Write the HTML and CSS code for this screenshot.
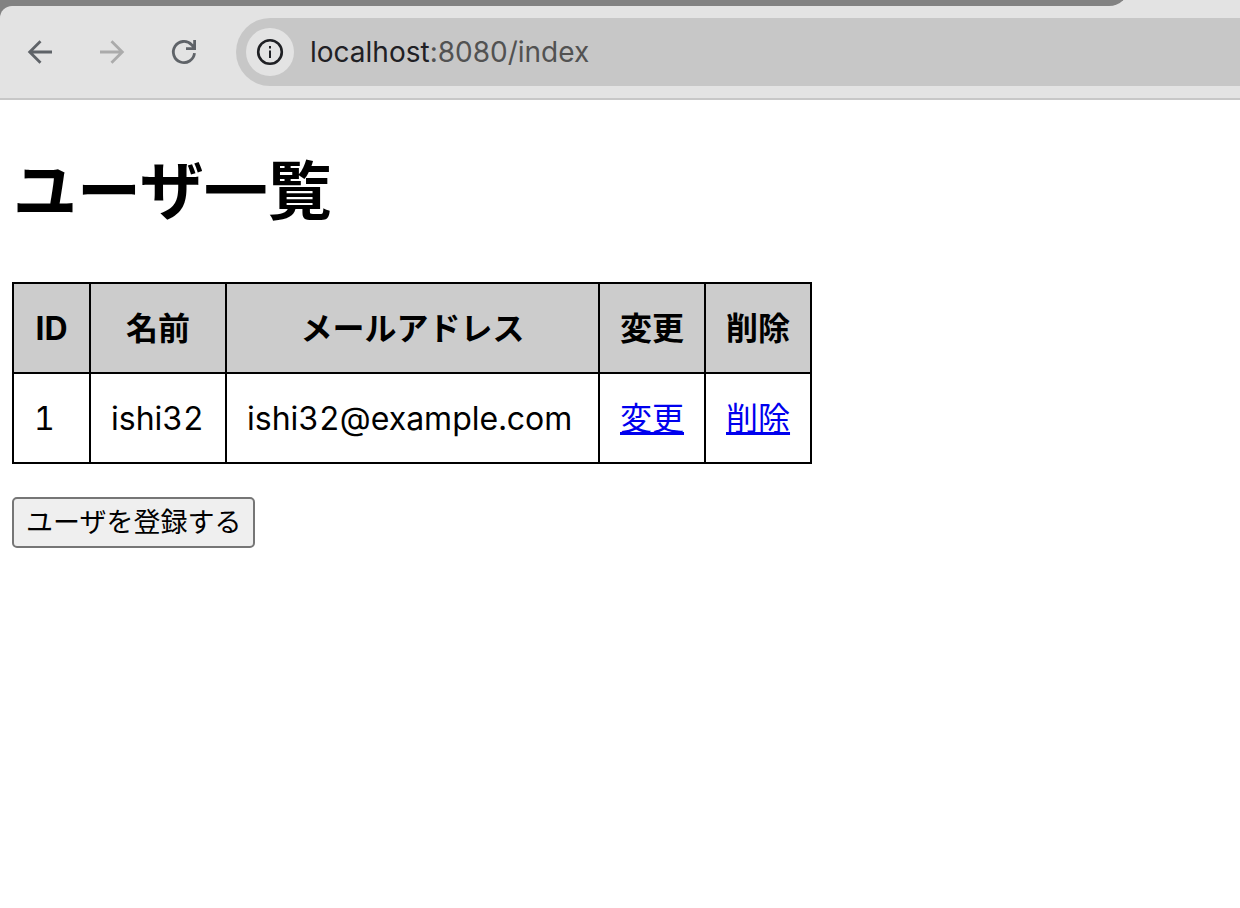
FILE: index.html
```html
<!DOCTYPE html>
<html lang="ja">
<head>
<meta charset="utf-8">
<title>ユーザ一覧</title>
<link rel="stylesheet" href="styles.css">
</head>
<body>
<header class="browser">
  <div class="tab-strip"><div class="tab-strip-fill"></div></div>
  <nav class="toolbar">
    <button class="nav-button" type="button" aria-label="戻る">
      <svg viewBox="0 0 32 32" width="32" height="32"><path d="M28 16H6M16.500 5.200L5.700 16L16.500 26.800"/></svg>
    </button>
    <button class="nav-button nav-button-off" type="button" aria-label="進む" disabled>
      <svg viewBox="0 0 32 32" width="32" height="32"><path d="M4 16H26M15.500 5.200L26.300 16L15.500 26.800"/></svg>
    </button>
    <button class="nav-button" type="button" aria-label="再読み込み">
      <svg viewBox="0 0 32 32" width="32" height="32"><path d="M26.500 17.200A10.600 10.600 0 1 1 23.600 8.700L26.500 11.800M26.600 4V12.600H18"/></svg>
    </button>
    <div class="address-bar">
      <button class="site-info" type="button" aria-label="サイト情報">
        <svg viewBox="0 0 28 28" width="28" height="28"><circle cx="14" cy="14" r="11.800"/><path class="site-info-i" d="M14 12.500V20M14 8V10.500"/></svg>
      </button>
      <span class="url">localhost<span class="url-path">:8080/index</span></span>
    </div>
  </nav>
</header>
<main class="page">
  <h1 class="title">ユーザ一覧</h1>
  <table class="users">
    <colgroup>
      <col class="col-id"><col class="col-name"><col class="col-mail"><col><col>
    </colgroup>
    <thead>
      <tr><th>ID</th><th>名前</th><th>メールアドレス</th><th>変更</th><th>削除</th></tr>
    </thead>
    <tbody>
      <tr><td>1</td><td>ishi32</td><td>ishi32@example.com</td><td><a href="#edit">変更</a></td><td><a href="#delete">削除</a></td></tr>
    </tbody>
  </table>
  <button class="register" type="button">ユーザを登録する</button>
</main>
</body>
</html>
```
FILE: styles.css
```css
* {
  box-sizing: border-box;
}

body {
  margin: 0;
  background: #fff;
  color: #000;
  font-family: Inter, "Noto Sans CJK JP", sans-serif;
  font-size: 32px;
}

.browser {
  background: #828282;
  border-bottom: 2px solid #c7c7c7;
}

.tab-strip {
  display: flex;
  align-items: flex-end;
  height: 6px;
  overflow: hidden;
  background: #e3e3e3;
}

.tab-strip-fill {
  flex: 1;
  height: 24px;
  margin-right: 111px;
  background: #828282;
  border-bottom-right-radius: 20px;
}

.toolbar {
  display: flex;
  align-items: center;
  padding: 12px 0 12px 24px;
  background: #e3e3e3;
  border-top-left-radius: 12px;
}

.nav-button {
  display: flex;
  margin: 0 40px 0 0;
  padding: 0;
  border: 0;
  background: none;
}

.nav-button svg {
  fill: none;
  stroke: #5f6368;
  stroke-width: 2.8;
}

.nav-button-off svg {
  stroke: #ababab;
}

.address-bar {
  flex: 1;
  display: flex;
  align-items: center;
  gap: 16px;
  height: 68px;
  margin-left: -4px;
  padding-left: 10px;
  background: #c7c7c7;
  border-radius: 34px 0 0 34px;
}

.site-info {
  display: grid;
  place-items: center;
  width: 48px;
  height: 48px;
  padding: 0;
  border: 0;
  border-radius: 50%;
  background: #e3e3e3;
}

.site-info svg {
  fill: none;
  stroke: #1f2024;
  stroke-width: 2.6;
}

.site-info .site-info-i {
  stroke-width: 2;
}

.url {
  color: #1f2024;
  font-size: 28px;
  line-height: 36px;
}

.url-path {
  color: #525252;
}

.page {
  padding: 42px 12px;
}

.title {
  margin: 0 0 42px;
  padding-left: 1px;
  font-size: 64px;
  line-height: 98px;
}

.users {
  margin-bottom: 33px;
  border-collapse: collapse;
  line-height: 48px;
}

.users th,
.users td {
  padding: 21px 20px 19px;
  border: 2px solid #000;
}

.users th {
  background: #ccc;
}

.users td {
  font-variant-numeric: tabular-nums;
}

.col-id {
  width: 77px;
}

.col-name {
  width: 136px;
}

.col-mail {
  width: 373px;
}

.users a {
  color: #00e;
}

.register {
  padding: 4px 12px;
  border: 2px solid #767676;
  border-radius: 5px;
  background: #efefef;
  color: #000;
  font-family: inherit;
  font-size: 27px;
  line-height: 39px;
}
```
